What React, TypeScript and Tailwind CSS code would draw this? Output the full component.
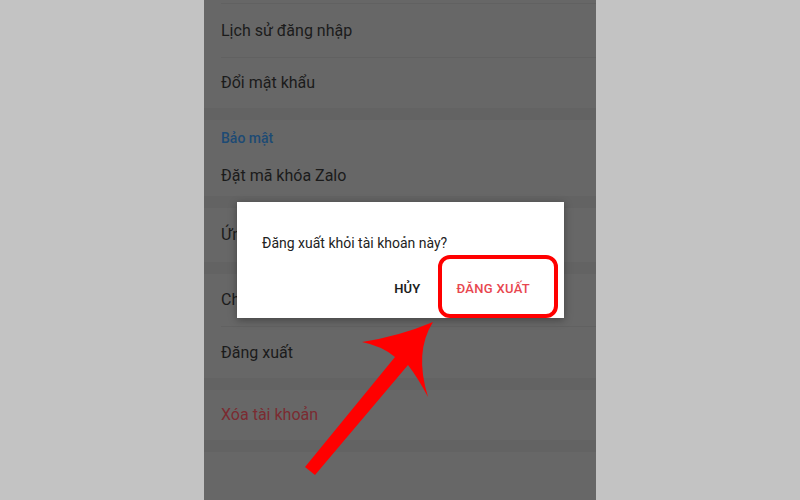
import React from 'react';

function Row({ label, h, tone = 'text-[#1b1b1b]' }: { label: string; h: string; tone?: string }) {
  return (
    <div className={`flex items-center pl-[17px] text-[16px] ${h} ${tone}`}>
      {label}
    </div>
  );
}

function Separator() {
  return <div className="ml-[17px] h-px bg-[#616161]" />;
}

function Band() {
  return <div className="h-[12px] bg-[#636363]" />;
}

function LogoutDialog() {
  return (
    <div className="absolute left-[33px] top-[202px] flex h-[116px] w-[327px] flex-col bg-white shadow-[0_2px_8px_rgba(0,0,0,0.35)]">
      <p className="pl-[25px] pt-[32px] text-[14px] leading-[18px] text-[#222]">
        Đăng xuất khỏi tài khoản này?
      </p>
      <div className="mt-auto flex items-center justify-end gap-[36px] pb-[21px] pr-[34px] text-[13px] leading-[16px]">
        <button className="font-semibold tracking-[0.2px] text-[#1e1e1e]">HỦY</button>
        <button className="font-medium tracking-[0.3px] text-[#e8474f]">ĐĂNG XUẤT</button>
      </div>
    </div>
  );
}

function Annotation() {
  return (
    <svg
      className="pointer-events-none absolute inset-0"
      width="800"
      height="500"
      viewBox="0 0 800 500">
      <rect x="440" y="257" width="116" height="59" rx="10" fill="none" stroke="#ff0000" strokeWidth="4" />
      <path
        d="M433 322 Q414 352 428 397 Q418 378 408 365 L315 475 L305 467 L395 357 Q382 346 362 342 Q400 336 433 322 Z"
        fill="#ff0000" />
    </svg>
  );
}

export default function App() {
  return (
    <div className="relative flex h-[500px] w-[800px] justify-center bg-[#c3c3c3] font-['Roboto',sans-serif]">
      <div className="relative h-full w-[392px] overflow-hidden bg-[#676767]">
        <div className="h-[3px]" />
        <Separator />
        <Row label="Lịch sử đăng nhập" h="h-[53px]" />
        <Separator />
        <Row label="Đổi mật khẩu" h="h-[50px]" />
        <Band />
        <div className="flex h-[35px] items-center pl-[17px] pt-[1px] text-[14px] font-medium text-[#1d4a74]">
          Bảo mật
        </div>
        <Row label="Đặt mã khóa Zalo" h="h-[41px]" />
        <Band />
        <Row label="Ứng dụng" h="h-[54px]" />
        <Band />
        <Row label="Chuyển tài khoản" h="h-[52px]" />
        <Separator />
        <Row label="Đăng xuất" h="h-[51px]" />
        <Band />
        <Row label="Xóa tài khoản" h="h-[50px]" tone="text-[#7b2b31]" />
        <Band />
        <LogoutDialog />
      </div>
      <Annotation />
    </div>
  );
}
